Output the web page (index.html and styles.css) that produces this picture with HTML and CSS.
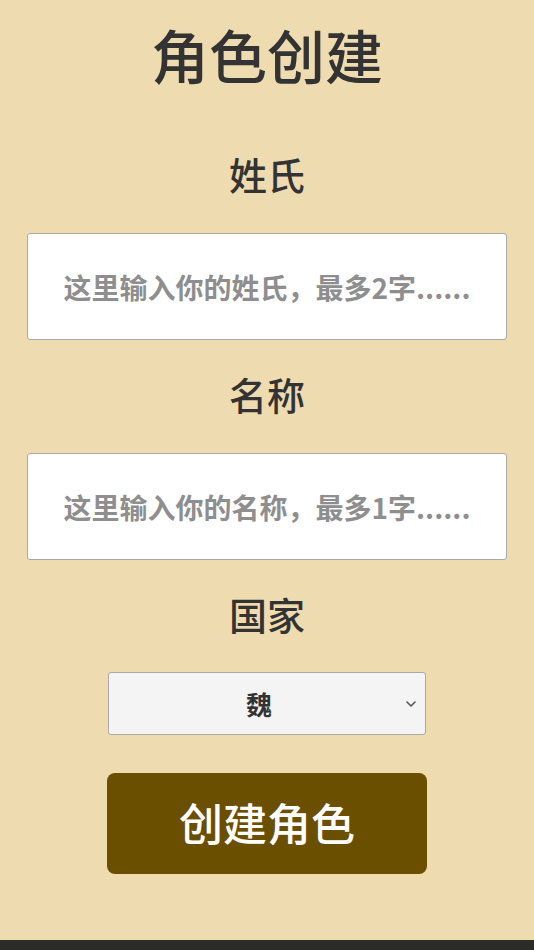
FILE: index.html
```html
<!DOCTYPE html>
<html lang="zh-CN">
<head>
<meta charset="utf-8">
<title>角色创建</title>
<link rel="stylesheet" href="styles.css">
</head>
<body>
<main class="page">
  <h1 class="title">角色创建</h1>
  <label class="label" for="surname">姓氏</label>
  <input class="field" id="surname" type="text" placeholder="这里输入你的姓氏，最多2字......">
  <label class="label" for="name">名称</label>
  <input class="field" id="name" type="text" placeholder="这里输入你的名称，最多1字......">
  <label class="label" for="country">国家</label>
  <div class="select-wrap">
    <select class="select" id="country">
      <option>魏</option>
      <option>蜀</option>
      <option>吴</option>
    </select>
    <svg class="chevron" width="10" height="6" viewBox="0 0 10 6"><path d="M1 1 L5 5 L9 1" fill="none" stroke="#555" stroke-width="1.6" stroke-linecap="round" stroke-linejoin="round"/></svg>
  </div>
  <button class="create" type="button">创建角色</button>
</main>
<div class="bottom-bar"></div>
</body>
</html>
```
FILE: styles.css
```css
html, body {
  margin: 0;
  padding: 0;
}
body {
  background: #2b2b27;
  font-family: "Noto Sans CJK SC", "Noto Sans", sans-serif;
  color: #333;
}
.page {
  background: #eedcb0;
  height: 940px;
  box-sizing: border-box;
  padding-top: 19px;
  display: flex;
  flex-direction: column;
  align-items: center;
}
.title {
  margin: 0;
  font-size: 58px;
  line-height: 70px;
  font-weight: 500;
  color: #333;
}
.label {
  display: block;
  font-size: 38px;
  line-height: 50px;
  font-weight: 500;
  color: #333;
  margin-top: 29px;
}
.title + .label {
  margin-top: 60px;
}
.field {
  margin-top: 34px;
  width: 480px;
  height: 107px;
  box-sizing: border-box;
  border: 1px solid #a9a9a9;
  border-radius: 3px;
  background: #fff;
  font-family: "Noto Sans CJK SC", "Noto Sans", sans-serif;
  font-size: 28px;
  font-weight: 700;
  text-align: center;
  color: #333;
  padding: 0 8px;
  outline: none;
}
.field::placeholder {
  color: #8e8e8e;
  opacity: 1;
}
.select-wrap {
  position: relative;
  margin-top: 33px;
  width: 318px;
  height: 63px;
}
.select {
  appearance: none;
  -webkit-appearance: none;
  width: 100%;
  height: 100%;
  box-sizing: border-box;
  border: 1px solid #a9a9a9;
  border-radius: 3px;
  background: #f4f4f4;
  font-family: "Noto Sans CJK SC", "Noto Sans", sans-serif;
  font-size: 26px;
  font-weight: 700;
  color: #333;
  text-align: center;
  text-align-last: center;
  padding: 0 16px 0 0;
  outline: none;
}
.chevron {
  position: absolute;
  right: 10px;
  top: 29px;
  pointer-events: none;
}
.create {
  margin-top: 38px;
  width: 320px;
  height: 101px;
  border: none;
  border-radius: 8px;
  background: #6b4f00;
  color: #fff;
  font-family: "Noto Sans CJK SC", "Noto Sans", sans-serif;
  font-size: 44px;
  font-weight: 500;
  line-height: 1;
  padding: 0 0 4px 0;
  cursor: pointer;
}
.bottom-bar {
  height: 10px;
  background: #2b2b27;
}
```
